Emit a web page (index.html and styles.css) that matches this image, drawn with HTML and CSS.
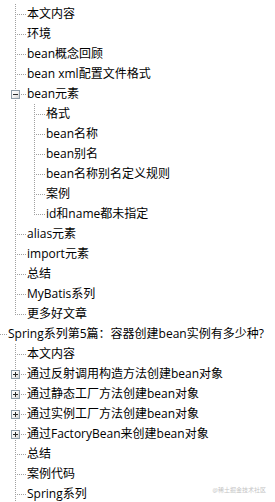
FILE: index.html
```html
<!DOCTYPE html>
<html lang="zh-CN">
<head>
<meta charset="utf-8">
<title>目录</title>
<link rel="stylesheet" href="styles.css">
</head>
<body>
<div class="view">
  <ul class="tree root">
    <li class="node">
      <div class="row"></div>
      <ul class="tree">
        <li class="node"><div class="row">本文内容</div></li>
        <li class="node"><div class="row">环境</div></li>
        <li class="node"><div class="row">bean概念回顾</div></li>
        <li class="node"><div class="row">bean xml配置文件格式</div></li>
        <li class="node">
          <div class="row"><span class="toggle minus"></span>bean元素</div>
          <ul class="tree">
            <li class="node"><div class="row">格式</div></li>
            <li class="node"><div class="row">bean名称</div></li>
            <li class="node"><div class="row">bean别名</div></li>
            <li class="node"><div class="row">bean名称别名定义规则</div></li>
            <li class="node"><div class="row">案例</div></li>
            <li class="node last"><div class="row">id和name都未指定</div></li>
          </ul>
        </li>
        <li class="node"><div class="row">alias元素</div></li>
        <li class="node"><div class="row">import元素</div></li>
        <li class="node"><div class="row">总结</div></li>
        <li class="node"><div class="row">MyBatis系列</div></li>
        <li class="node last"><div class="row">更多好文章</div></li>
      </ul>
    </li>
    <li class="node">
      <div class="row">Spring系列第5篇：容器创建bean实例有多少种?</div>
      <ul class="tree">
        <li class="node"><div class="row">本文内容</div></li>
        <li class="node"><div class="row"><span class="toggle plus"></span>通过反射调用构造方法创建bean对象</div></li>
        <li class="node"><div class="row"><span class="toggle plus"></span>通过静态工厂方法创建bean对象</div></li>
        <li class="node"><div class="row"><span class="toggle plus"></span>通过实例工厂方法创建bean对象</div></li>
        <li class="node"><div class="row"><span class="toggle plus"></span>通过FactoryBean来创建bean对象</div></li>
        <li class="node"><div class="row">总结</div></li>
        <li class="node"><div class="row">案例代码</div></li>
        <li class="node"><div class="row">Spring系列</div></li>
      </ul>
    </li>
  </ul>
  <div class="watermark">@稀土掘金技术社区</div>
</div>
</body>
</html>
```
FILE: styles.css
```css
html, body {
  margin: 0;
  padding: 0;
  background: #fff;
}
.view {
  position: relative;
  width: 275px;
  height: 502px;
  overflow: hidden;
  font-family: "Open Sans", "Noto Sans CJK SC", sans-serif;
  font-size: 12px;
  color: #000;
}
.tree {
  list-style: none;
  margin: 0 0 0 7px;
  padding: 0;
}
.tree.root {
  margin: -16px 0 0 -4px;
}
.node {
  padding-left: 12px;
  background-image: repeating-linear-gradient(to bottom, #a0a0a0 0 1px, transparent 1px 2px);
  background-size: 1px 100%;
  background-repeat: no-repeat;
  background-position: 0 0;
}
.node.last {
  background-image: none;
}
.row {
  height: 20px;
  line-height: 20px;
  white-space: nowrap;
  display: flex;
  align-items: center;
  margin-left: -12px;
  padding-left: 12px;
  background-image: repeating-linear-gradient(to right, #a0a0a0 0 1px, transparent 1px 2px);
  background-size: 9px 1px;
  background-repeat: no-repeat;
  background-position: 2px 10px;
}
.node.last > .row {
  background-image:
    repeating-linear-gradient(to right, #a0a0a0 0 1px, transparent 1px 2px),
    repeating-linear-gradient(to bottom, #a0a0a0 0 1px, transparent 1px 2px);
  background-size: 9px 1px, 1px 11px;
  background-position: 2px 10px, 0 0;
}
.toggle {
  flex: none;
  box-sizing: border-box;
  width: 9px;
  height: 9px;
  margin-left: -16px;
  margin-right: 7px;
  border: 1px solid #8e9ca8;
  background: linear-gradient(135deg, #ffffff 0%, #f2f2f2 50%, #d4d4d4 100%);
  position: relative;
  margin-top: 1px;
}
.toggle::before {
  content: "";
  position: absolute;
  left: 1px;
  top: 3px;
  width: 5px;
  height: 1px;
  background: #2a2a2a;
}
.toggle.plus::after {
  content: "";
  position: absolute;
  left: 3px;
  top: 1px;
  width: 1px;
  height: 5px;
  background: #2a2a2a;
}
.watermark {
  position: absolute;
  right: 9px;
  bottom: 8px;
  font-size: 6px;
  line-height: 8px;
  color: #c4c4c4;
  white-space: nowrap;
}
```
